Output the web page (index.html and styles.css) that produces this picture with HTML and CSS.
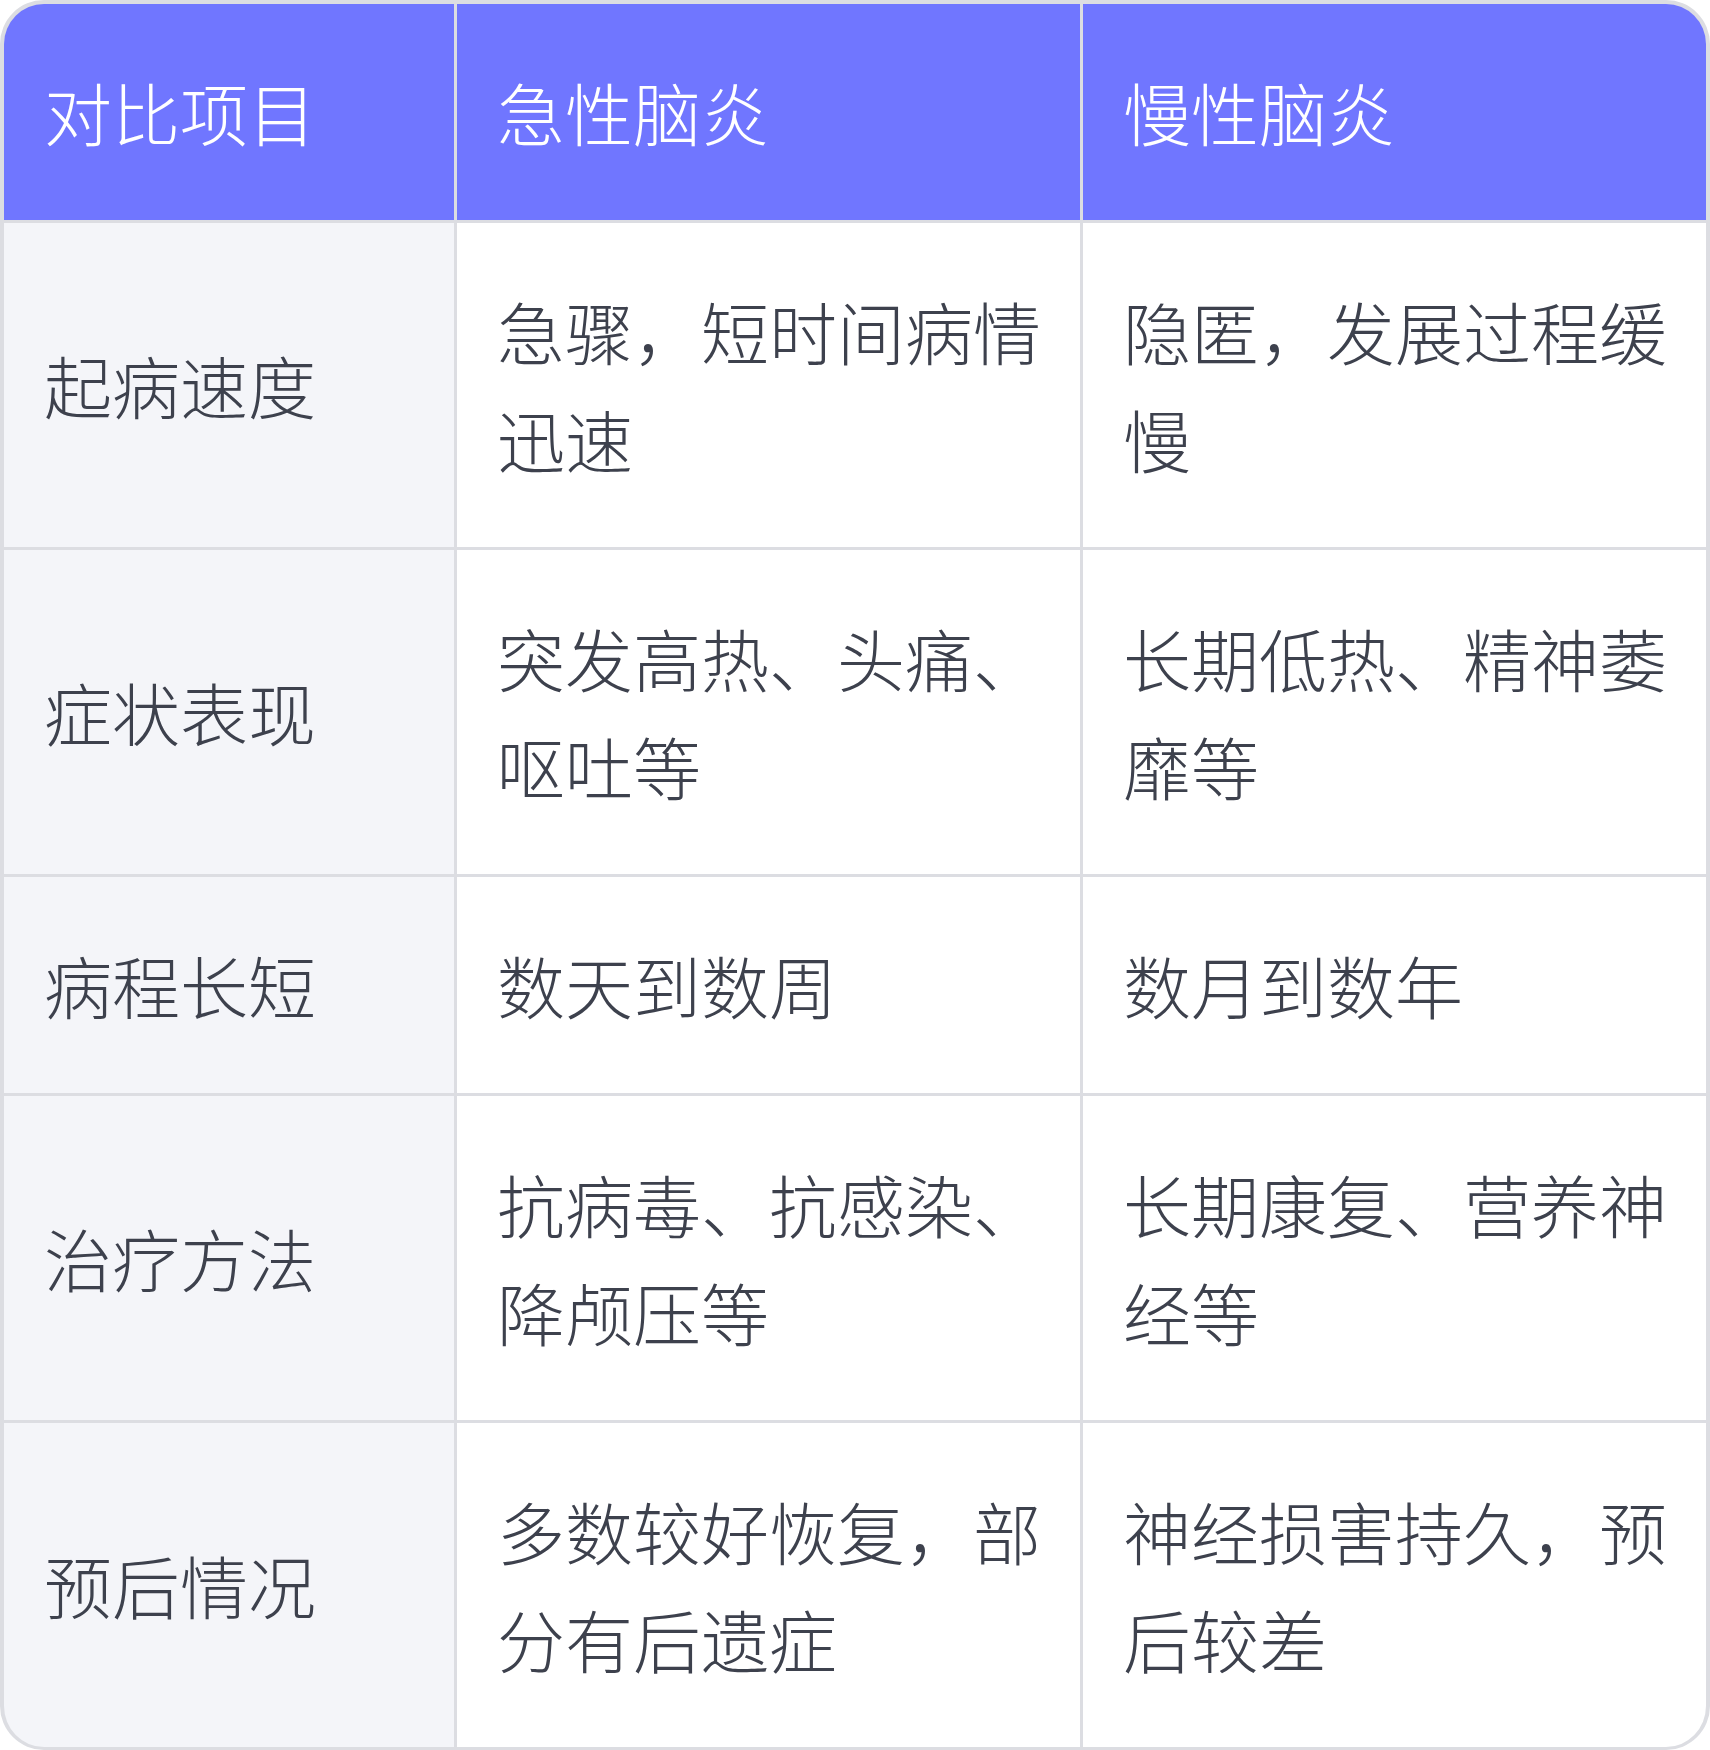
FILE: index.html
```html
<!DOCTYPE html>
<html lang="zh-CN">
<head>
<meta charset="utf-8">
<title>急性脑炎与慢性脑炎对比</title>
<link rel="stylesheet" href="styles.css">
</head>
<body>
<div class="table" role="table">
  <div class="cell head" role="columnheader">对比项目</div>
  <div class="cell head" role="columnheader">急性脑炎</div>
  <div class="cell head" role="columnheader">慢性脑炎</div>

  <div class="cell label" role="rowheader">起病速度</div>
  <div class="cell" role="cell">急骤，短时间病情迅速</div>
  <div class="cell" role="cell">隐匿，发展过程缓慢</div>

  <div class="cell label" role="rowheader">症状表现</div>
  <div class="cell" role="cell">突发高热、头痛、呕吐等</div>
  <div class="cell" role="cell">长期低热、精神萎靡等</div>

  <div class="cell label" role="rowheader">病程长短</div>
  <div class="cell" role="cell">数天到数周</div>
  <div class="cell" role="cell">数月到数年</div>

  <div class="cell label" role="rowheader">治疗方法</div>
  <div class="cell" role="cell">抗病毒、抗感染、降颅压等</div>
  <div class="cell" role="cell">长期康复、营养神经等</div>

  <div class="cell label" role="rowheader">预后情况</div>
  <div class="cell" role="cell">多数较好恢复，部分有后遗症</div>
  <div class="cell" role="cell">神经损害持久，预后较差</div>
</div>
</body>
</html>
```

FILE: styles.css
```css
html, body {
  margin: 0;
  padding: 0;
  background: #ffffff;
}

.table {
  box-sizing: border-box;
  width: 1710px;
  display: grid;
  grid-template-columns: 450px 623px 623px;
  gap: 3px;
  background: #dcdde2;
  border: 4px solid #dcdde2;
  border-bottom-width: 3px;
  border-radius: 44px;
  overflow: hidden;
  font-family: "Noto Sans CJK SC", "Noto Sans", sans-serif;
  font-weight: 200;
  font-size: 68px;
  line-height: 108px;
  color: #3d414d;
}

.cell {
  box-sizing: border-box;
  padding: 54px 34px 54px 40px;
  background: #ffffff;
  display: flex;
  align-items: center;
}

.cell.head {
  background: #7076ff;
  color: #ffffff;
}

.cell.label {
  background: #f4f5f9;
}
```
